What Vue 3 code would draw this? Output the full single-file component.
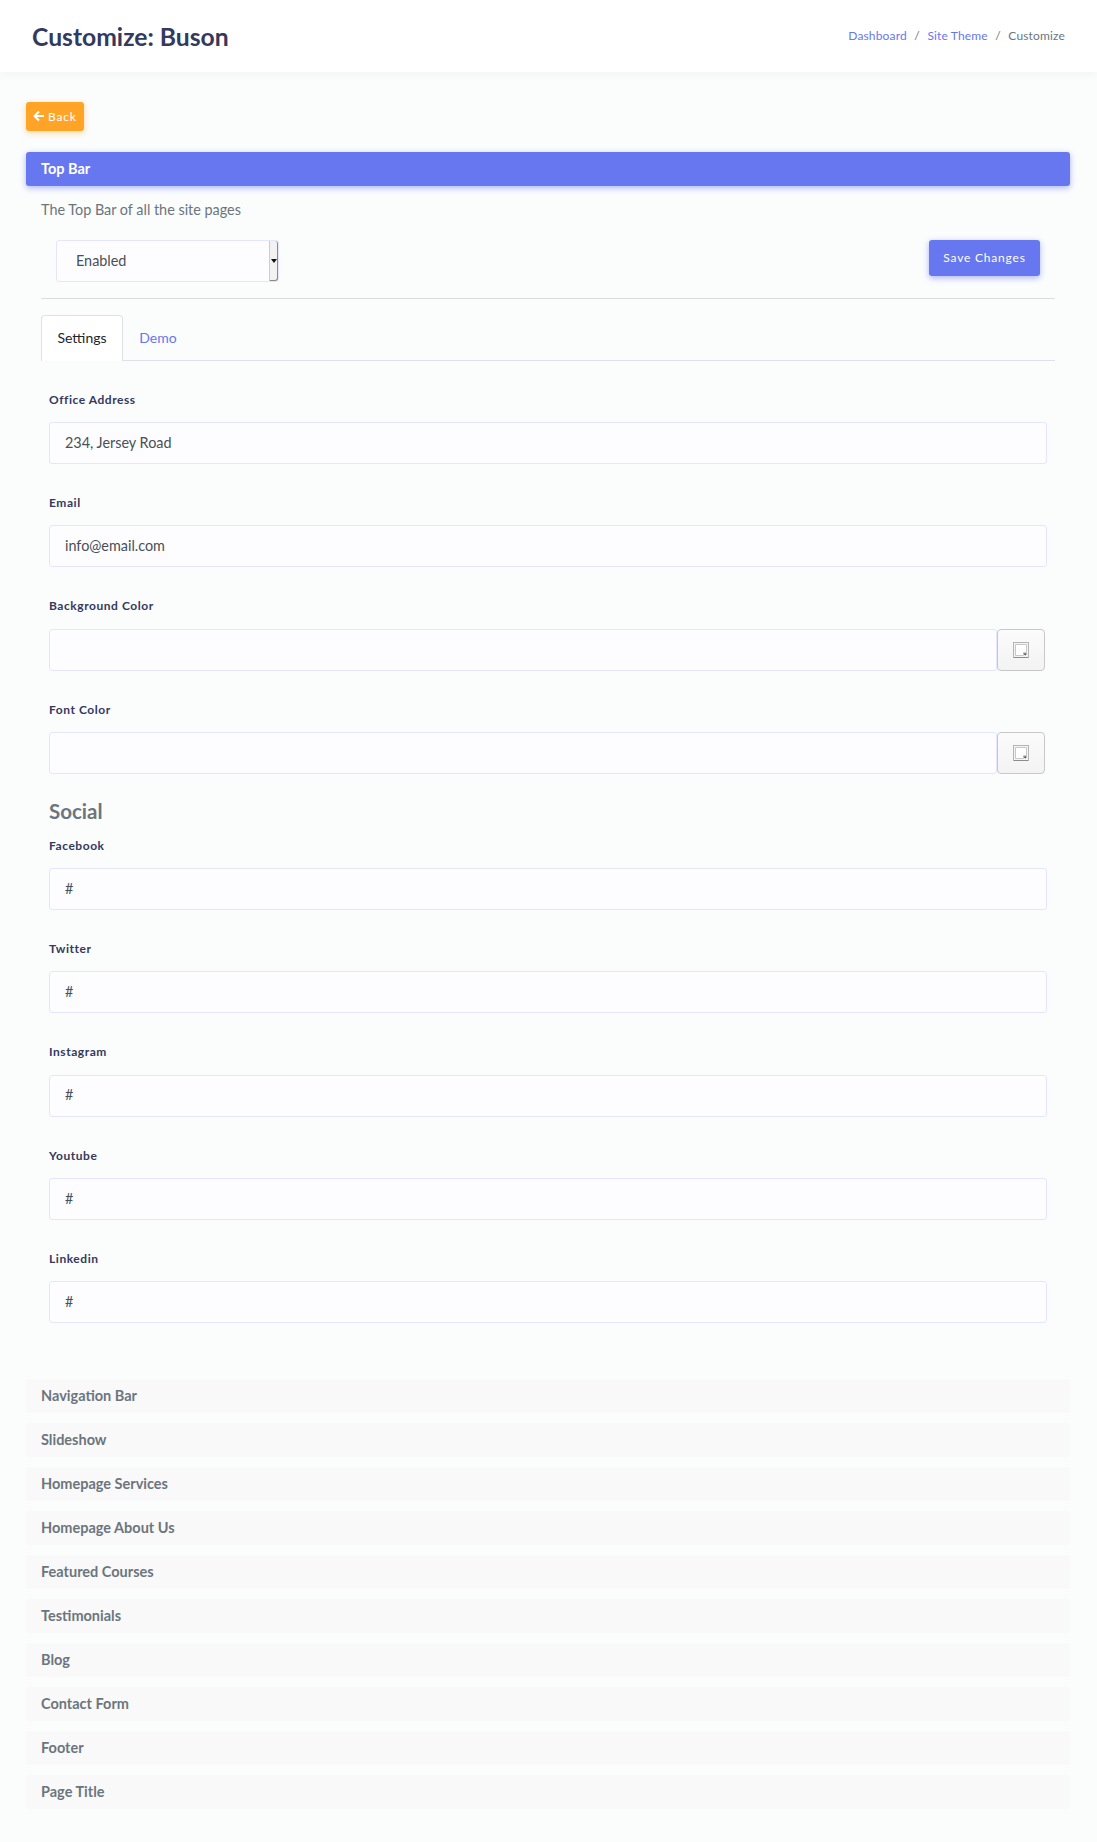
<template>
  <div class="page">
    <header class="top">
      <h1>Customize: Buson</h1>
      <nav class="crumbs">
        <a>Dashboard</a><i>/</i><a>Site Theme</a><i>/</i><span>Customize</span>
      </nav>
    </header>

    <main class="content">
      <a class="back">
        <svg width="12" height="12" viewBox="0 0 12 12" fill="none" stroke="#fff" stroke-width="2">
          <path d="M11 6H2M6 1.5 1.5 6 6 10.5"/>
        </svg>
        Back
      </a>

      <div class="bar active">Top Bar</div>
      <div class="panel">
        <p class="desc">The Top Bar of all the site pages</p>
        <div class="status-row">
          <div class="select-wrap">
            <select class="select">
              <option>Enabled</option>
            </select>
            <span class="select-btn"></span>
          </div>
          <button class="save">Save Changes</button>
        </div>
        <hr />

        <div class="tabs">
          <span class="tab on">Settings</span>
          <span class="tab">Demo</span>
        </div>

        <div class="form">
          <div v-for="f in mainFields" :key="f.label" class="group">
            <label>{{ f.label }}</label>
            <div class="field-row">
              <input class="input" :value="f.value" />
              <button v-if="f.color" class="swatch">
                <svg width="16" height="16" viewBox="0 0 16 16">
                  <rect x="0.5" y="0.5" width="15" height="15" fill="#f4f4f4" stroke="#b4b4b4"/>
                  <path d="M2.5 2.5H13.5V10.5H10.5V13.5H2.5Z" fill="#fff" stroke="#c8c8c8"/>
                  <path d="M1 15.5H15" stroke="#8c8c8c"/>
                  <path d="M10.5 11.5H14L12.2 13.5Z" fill="#333"/>
                </svg>
              </button>
            </div>
          </div>

          <h4 class="social">Social</h4>

          <div v-for="f in socialFields" :key="f" class="group">
            <label>{{ f }}</label>
            <div class="field-row">
              <input class="input" value="#" />
            </div>
          </div>
        </div>
      </div>

      <div class="sections">
        <div v-for="s in sections" :key="s" class="bar closed">{{ s }}</div>
      </div>
    </main>
  </div>
</template>

<script setup>
const mainFields = [
  { label: 'Office Address', value: '234, Jersey Road' },
  { label: 'Email', value: 'info@email.com' },
  { label: 'Background Color', value: '', color: true },
  { label: 'Font Color', value: '', color: true },
]

const socialFields = ['Facebook', 'Twitter', 'Instagram', 'Youtube', 'Linkedin']

const sections = [
  'Navigation Bar',
  'Slideshow',
  'Homepage Services',
  'Homepage About Us',
  'Featured Courses',
  'Testimonials',
  'Blog',
  'Contact Form',
  'Footer',
  'Page Title',
]
</script>

<style>
body {
  background: #fbfcfc;
}
</style>

<style scoped>
.page {
  font-family: Lato, "Noto Sans", sans-serif;
  font-size: 14.4px;
  color: #6c757d;
  min-height: 1842px;
  background: #fbfcfc;
}

.top {
  height: 72px;
  background: #fff;
  box-shadow: 0 4px 8px rgb(0 0 0 / 3%);
  display: flex;
  align-items: center;
  justify-content: space-between;
  padding: 0 32px;
  box-sizing: border-box;
}

.top h1 {
  margin: 0;
  font-size: 24.7px;
  font-weight: 700;
  color: #34395e;
}

.crumbs {
  display: flex;
  align-items: center;
  font-size: 12px;
  letter-spacing: 0.15px;
  color: #6c757d;
  padding-bottom: 1px;
}

.crumbs a {
  color: #6777ef;
}

.crumbs i {
  font-style: normal;
  margin: 0 7.5px;
}

.content {
  padding: 30px 27px 0 26px;
}

.back {
  display: inline-flex;
  align-items: center;
  gap: 3px;
  height: 29px;
  width: 58px;
  padding: 0 7px 1px;
  box-sizing: border-box;
  background: #ffa426;
  color: #fff;
  font-size: 12px;
  letter-spacing: 0.8px;
  border-radius: 3px;
  box-shadow: 0 2px 6px #fcd9a0;
}

.bar {
  height: 34px;
  padding: 0 15px 1px;
  display: flex;
  align-items: center;
  border-radius: 3px;
  font-size: 14.5px;
  font-weight: 700;
  box-sizing: border-box;
}

.bar.active {
  margin-top: 21px;
  background: #6777ef;
  color: #fff;
  box-shadow: 0 2px 6px #acb5f6;
}

.bar.closed {
  background: #f9f9f9;
  color: #6c757d;
}

.panel {
  padding: 12px 15px 0;
}

.desc {
  margin: 0;
  line-height: 24px;
}

.status-row {
  display: flex;
  justify-content: space-between;
  align-items: flex-start;
  padding: 18px 15px 0;
}

.select-wrap {
  position: relative;
  width: 223px;
  height: 42px;
}

.select {
  width: 100%;
  height: 100%;
  appearance: none;
  background: #fdfdff;
  border: 1px solid #e4e6fc;
  border-radius: 3px;
  padding: 0 19px 2px;
  font: inherit;
  color: #495057;
}

.select-btn {
  position: absolute;
  right: 1px;
  top: 1px;
  bottom: 1px;
  width: 9px;
  background: #f2f2f2;
  border-left: 1px solid #ccc;
  border-right: 1px solid #8a8a8a;
  border-bottom: 1px solid #8a8a8a;
  border-radius: 0 3px 3px 0;
  box-sizing: border-box;
}

.select-btn::after {
  content: "";
  position: absolute;
  left: 1px;
  top: 18px;
  border: 3px solid transparent;
  border-top: 4px solid #111;
}

.save {
  width: 111px;
  height: 36px;
  border: 0;
  border-radius: 3px;
  background: #6777ef;
  color: #fff;
  font: inherit;
  font-size: 12px;
  letter-spacing: 0.8px;
  padding: 0 0 2px;
  box-shadow: 0 2px 6px #acb5f6;
}

hr {
  margin: 16px 0;
  border: 0;
  border-top: 1px solid #dcdcdc;
}

.tabs {
  display: flex;
  border-bottom: 1px solid #dee2e6;
  height: 46px;
  box-sizing: border-box;
  font-size: 14px;
}

.tab {
  width: 70px;
  height: 46px;
  box-sizing: border-box;
  display: flex;
  align-items: center;
  justify-content: center;
  padding-bottom: 2px;
  color: #6777ef;
}

.tab.on {
  width: 82px;
  background: #fff;
  color: #212529;
  border: 1px solid #dee2e6;
  border-bottom: 0;
  border-radius: 4px 4px 0 0;
}

.form {
  padding: 28.7px 8px 0;
}

.group {
  margin-bottom: 29px;
}

.group label {
  display: block;
  font-size: 12px;
  font-weight: 700;
  letter-spacing: 0.55px;
  color: #34395e;
  line-height: 20.33px;
  margin-bottom: 12px;
}

.field-row {
  display: flex;
}

.input {
  flex: 1;
  min-width: 0;
  height: 42px;
  box-sizing: border-box;
  background: #fdfdff;
  border: 1px solid #e4e6fc;
  border-radius: 3px;
  padding: 0 15px 2px;
  font: inherit;
  color: #495057;
  outline: none;
}

.swatch {
  width: 48px;
  height: 42px;
  margin-right: 2px;
  padding: 0;
  border: 1px solid #c8c8c8;
  border-radius: 4px;
  background: linear-gradient(#fbfbfb, #f3f3f3);
  display: flex;
  align-items: center;
  justify-content: center;
}

.social {
  margin: -4px 0 12.7px;
  font-size: 20.5px;
  font-weight: 700;
  color: #6c757d;
  line-height: 24px;
}

.sections {
  margin-top: 55.6px;
  display: flex;
  flex-direction: column;
  gap: 10px;
}
</style>
